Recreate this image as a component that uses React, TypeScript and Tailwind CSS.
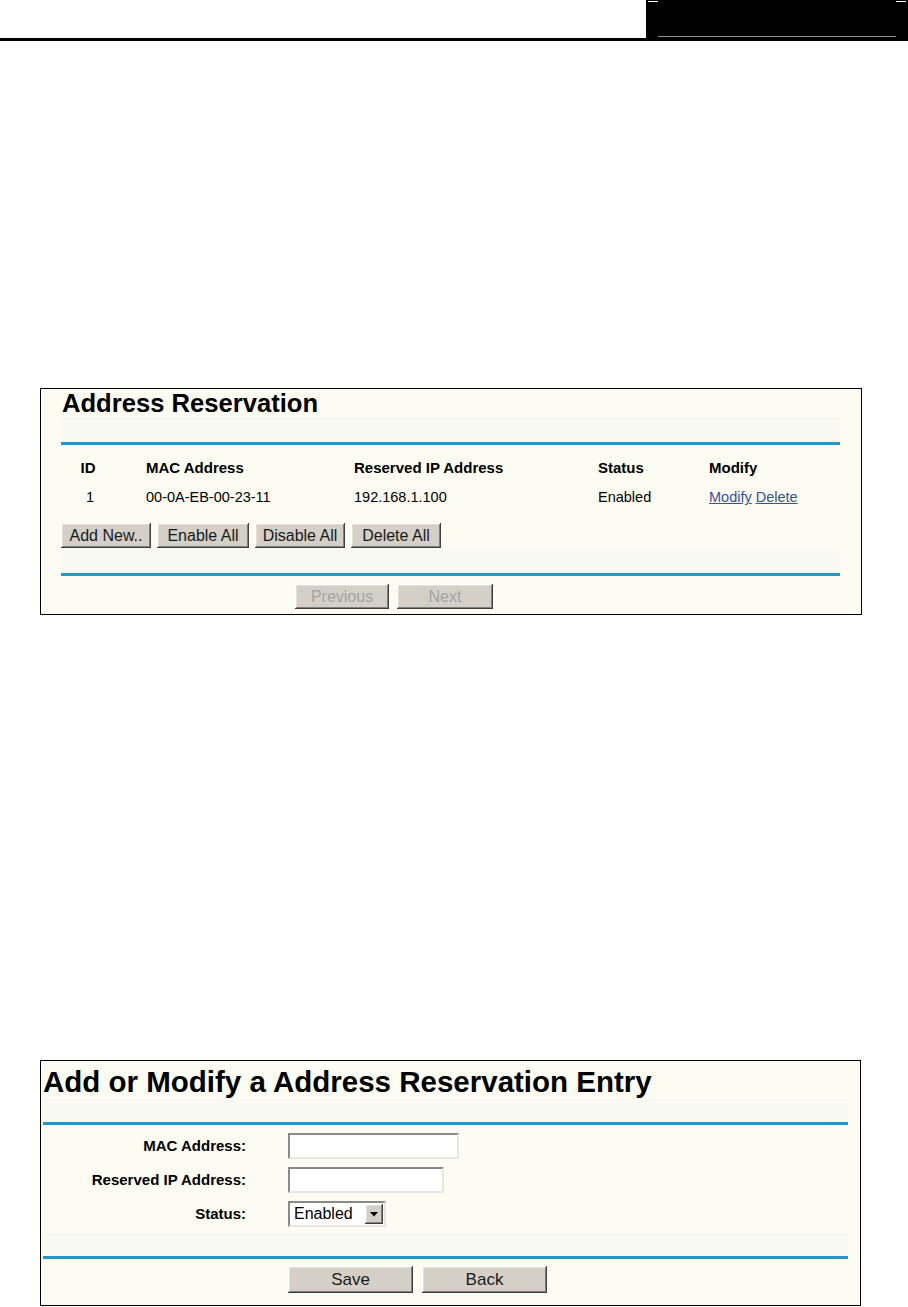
import React from "react";

const font = { fontFamily: '"Liberation Sans", Arial, sans-serif' };

const bevel =
  "bg-[#d4d0c8] shadow-[inset_-1px_-1px_#404040,inset_1px_1px_#ffffff,inset_-2px_-2px_#808080,inset_2px_2px_#e4e1da]";

const Btn = ({ label, w, h = "h-[25px]", text = "text-[16px]", disabled = false }: { label: string; w: string; h?: string; text?: string; disabled?: boolean }) => (
  <button
    type="button"
    className={`${bevel} ${w} ${h} ${text} flex items-center justify-center leading-none ${disabled ? "text-[#a3a3a3]" : "text-[#1a1a1a]"}`}
  >
    {label}
  </button>
);

const Field = ({ w }: { w: string }) => (
  <div className={`${w} h-[26px] border-2 border-t-[#8a8a8a] border-l-[#8a8a8a] border-b-[#e6e6e6] border-r-[#e6e6e6] bg-white`} />
);

const Rule = () => <div className="h-[3px] bg-[#2397c9]" />;

export default function App() {
  return (
    <div className="min-h-[1307px] w-[908px] bg-white text-black" style={font}>
      {/* page header */}
      <div className="flex h-[38px]">
        <div className="flex-1" />
        <div className="flex w-[262px] flex-col justify-between bg-black">
          <div className="flex justify-between px-[2px] pt-[1px]">
            <div className="h-[1px] w-[10px] bg-white" />
            <div className="h-[1px] w-[10px] bg-white" />
          </div>
          <div className="mx-[12px] mb-[1px] h-[1px] bg-[#8c8c8c]" />
        </div>
      </div>
      <div className="h-[3px] bg-black" />

      {/* Address Reservation */}
      <div className="ml-[40px] mt-[347px] w-[822px] border border-black bg-[#fcfcf2] pl-[20px] pr-[21px] pb-[5px]">
        <div className="pl-[1px] text-[25.6px] font-bold leading-[28px]">Address Reservation</div>
        <div className="h-[25px] bg-[#f9f9f4]" />
        <Rule />
        <div className="pt-[9px]">
          <div className="grid h-[28px] grid-cols-[85px_208px_244px_111px_1fr] items-center text-[15px] font-bold">
            <div className="w-[54px] text-center">ID</div>
            <div>MAC Address</div>
            <div>Reserved IP Address</div>
            <div>Status</div>
            <div>Modify</div>
          </div>
          <div className="grid h-[32px] grid-cols-[85px_208px_244px_111px_1fr] items-center text-[14.5px]">
            <div className="w-[58px] text-center">1</div>
            <div>00-0A-EB-00-23-11</div>
            <div>192.168.1.100</div>
            <div>Enabled</div>
            <div className="flex gap-[4px] text-[#3550a8] underline">
              <span>Modify</span>
              <span>Delete</span>
            </div>
          </div>
        </div>
        <div className="mt-[9px] flex gap-[6px]">
          <Btn label="Add New.." w="w-[90px]" />
          <Btn label="Enable All" w="w-[92px]" />
          <Btn label="Disable All" w="w-[90px]" />
          <Btn label="Delete All" w="w-[90px]" />
        </div>
        <div className="h-[25px] bg-[#f9f9f4]" />
        <Rule />
        <div className="mt-[8px] flex gap-[8px] pl-[234px]">
          <Btn label="Previous" w="w-[94px]" disabled />
          <Btn label="Next" w="w-[96px]" disabled />
        </div>
      </div>

      {/* Add or Modify entry */}
      <div className="ml-[40px] mt-[445px] w-[821px] border border-black bg-[#fcfcf2] pl-[2px] pr-[12px] pb-[12px]">
        <div className="pt-[4px] text-[29.5px] font-bold leading-[34px]">Add or Modify a Address Reservation Entry</div>
        <div className="h-[23px] bg-[#f9f9f4]" />
        <Rule />
        <div className="flex flex-col gap-[8px] pt-[8px] text-[15px] font-bold">
          <div className="flex h-[26px] items-center gap-[42px]">
            <div className="w-[203px] text-right">MAC Address:</div>
            <Field w="w-[171px]" />
          </div>
          <div className="flex h-[26px] items-center gap-[42px]">
            <div className="w-[203px] text-right">Reserved IP Address:</div>
            <Field w="w-[156px]" />
          </div>
          <div className="flex h-[26px] items-center gap-[42px]">
            <div className="w-[203px] text-right">Status:</div>
            <div className="flex h-[26px] w-[98px] items-center border-2 border-t-[#8a8a8a] border-l-[#8a8a8a] border-b-[#e6e6e6] border-r-[#e6e6e6] bg-white font-normal">
              <span className="flex-1 pl-[4px] text-[16px] leading-none">Enabled</span>
              <div className={`${bevel} mr-[1px] flex h-[20px] w-[18px] items-center justify-center`}>
                <svg width="8" height="5" viewBox="0 0 8 5">
                  <path d="M0 0h8L4 4.5z" fill="#000" />
                </svg>
              </div>
            </div>
          </div>
        </div>
        <div className="mt-[6px] h-[23px] bg-[#f9f9f4]" />
        <Rule />
        <div className="mt-[7px] flex gap-[9px] pl-[245px]">
          <Btn label="Save" w="w-[125px]" h="h-[27px]" text="text-[17px]" />
          <Btn label="Back" w="w-[125px]" h="h-[27px]" text="text-[17px]" />
        </div>
      </div>
    </div>
  );
}
